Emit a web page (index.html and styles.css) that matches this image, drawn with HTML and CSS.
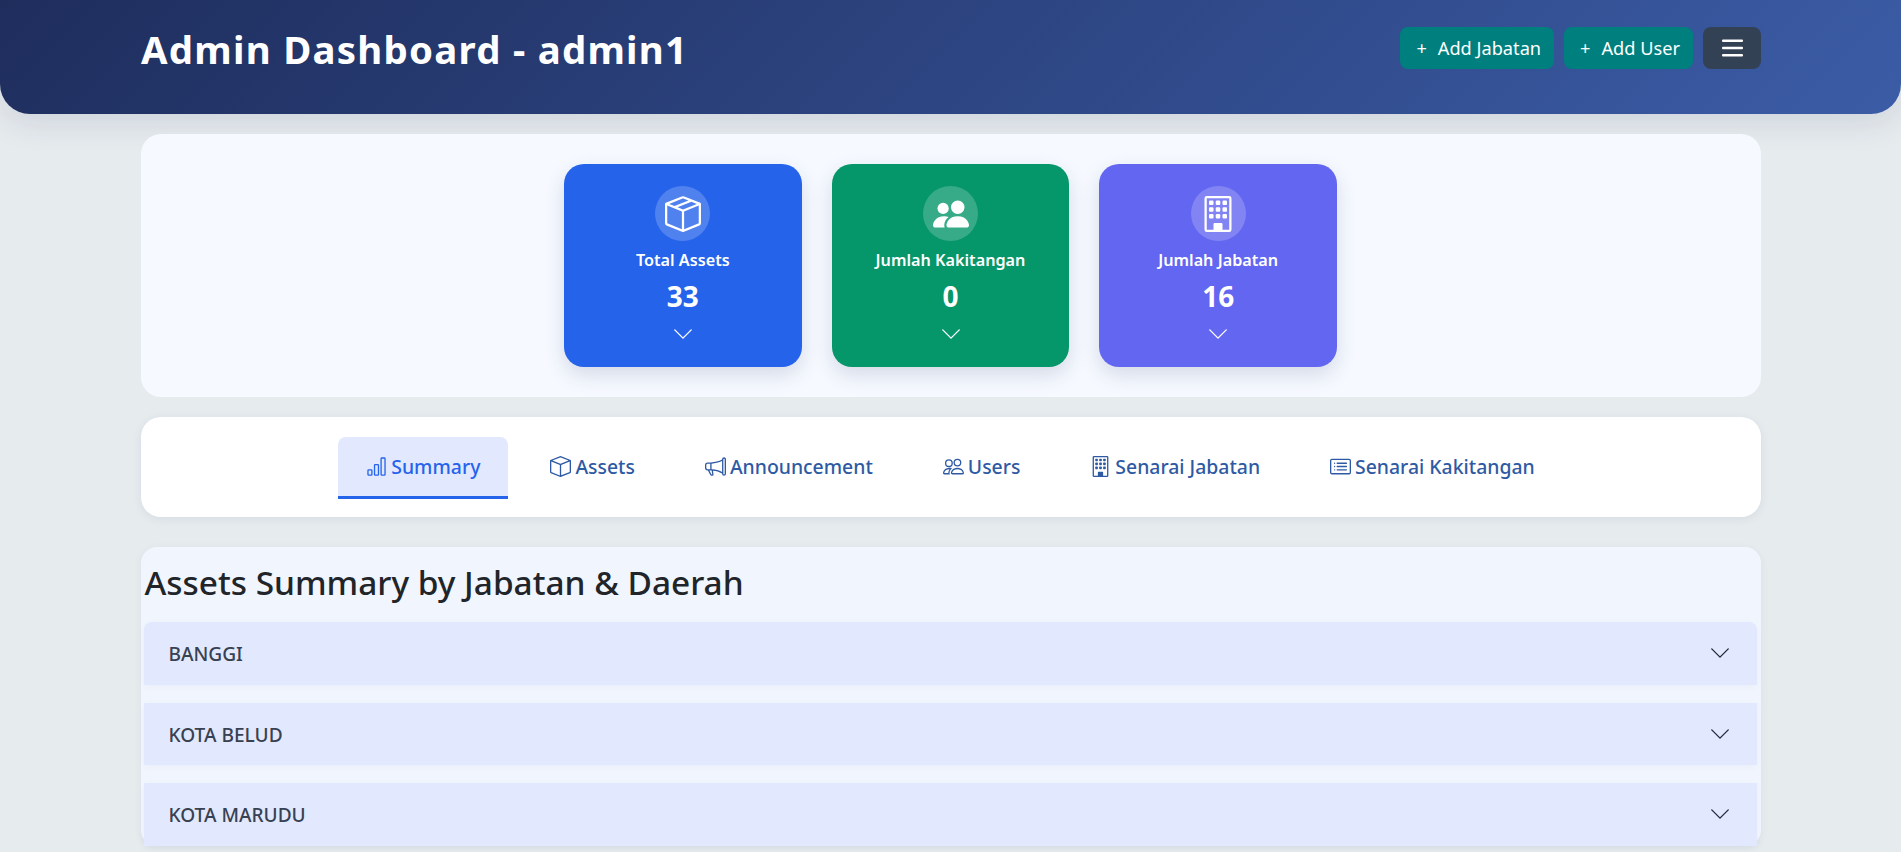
FILE: index.html
```html
<!DOCTYPE html>
<html lang="en">
<head>
  <meta charset="UTF-8">
  <meta name="viewport" content="width=device-width, initial-scale=1.0">
  <title>Admin Dashboard</title>
  <link rel="stylesheet" href="styles.css">
</head>
<body>

<!-- Icon sprite -->
<svg class="sprite" xmlns="http://www.w3.org/2000/svg">
  <symbol id="i-box-seam" viewBox="0 0 16 16"><path d="M8.186 1.113a.5.5 0 0 0-.372 0L1.846 3.5l2.404.961L10.404 2l-2.218-.887zm3.564 1.426L5.596 5 8 5.961 14.154 3.5l-2.404-.961zm3.25 1.7-6.5 2.6v7.922l6.5-2.6V4.24zM7.5 14.762V6.838L1 4.239v7.925l6.5 2.6zM7.443.184a1.5 1.5 0 0 1 1.114 0l7.129 2.852A.5.5 0 0 1 16 3.5v8.662a1 1 0 0 1-.629.928l-7.185 2.874a.5.5 0 0 1-.372 0L.63 13.09a1 1 0 0 1-.63-.928V3.5a.5.5 0 0 1 .314-.464L7.443.184z"/></symbol>
  <symbol id="i-box" viewBox="0 0 16 16"><path d="M8.186 1.113a.5.5 0 0 0-.372 0L1.846 3.5 8 5.961 14.154 3.5 8.186 1.113zM15 4.239l-6.5 2.6v7.922l6.5-2.6V4.24zM7.5 14.762V6.838L1 4.239v7.925l6.5 2.6zM7.443.184a1.5 1.5 0 0 1 1.114 0l7.129 2.852A.5.5 0 0 1 16 3.5v8.662a1 1 0 0 1-.629.928l-7.185 2.874a.5.5 0 0 1-.372 0L.63 13.09a1 1 0 0 1-.63-.928V3.5a.5.5 0 0 1 .314-.464L7.443.184z"/></symbol>
  <symbol id="i-people-fill" viewBox="0 0 16 16"><path d="M7 14s-1 0-1-1 1-4 5-4 5 3 5 4-1 1-1 1H7zm4-6a3 3 0 1 0 0-6 3 3 0 0 0 0 6z"/><path d="M5.216 14A2.238 2.238 0 0 1 5 13c0-1.355.68-2.75 1.936-3.72A6.325 6.325 0 0 0 5 9c-4 0-5 3-5 4s1 1 1 1h4.216z"/><path d="M4.5 8a2.5 2.5 0 1 0 0-5 2.5 2.5 0 0 0 0 5z"/></symbol>
  <symbol id="i-people" viewBox="0 0 16 16"><path d="M15 14s1 0 1-1-1-4-5-4-5 3-5 4 1 1 1 1h8Zm-7.978-1A.261.261 0 0 1 7 12.996c.001-.264.167-1.03.76-1.72C8.312 10.629 9.282 10 11 10c1.717 0 2.687.63 3.24 1.276.593.69.758 1.457.76 1.72l-.008.002a.274.274 0 0 1-.014.002H7.022ZM11 7a2 2 0 1 0 0-4 2 2 0 0 0 0 4Zm3-2a3 3 0 1 1-6 0 3 3 0 0 1 6 0ZM6.936 9.28a5.88 5.88 0 0 0-1.23-.247A7.35 7.35 0 0 0 5 9c-4 0-5 3-5 4 0 .667.333 1 1 1h4.216A2.238 2.238 0 0 1 5 13c0-1.01.377-2.042 1.09-2.904.243-.294.526-.569.846-.816ZM4.92 10A5.493 5.493 0 0 0 4 13H1c0-.26.164-1.03.76-1.724.545-.636 1.492-1.256 3.16-1.275ZM1.5 5.5a3 3 0 1 1 6 0 3 3 0 0 1-6 0Zm3-2a2 2 0 1 0 0 4 2 2 0 0 0 0-4Z"/></symbol>
  <symbol id="i-building" viewBox="0 0 16 16"><path d="M2 1a1 1 0 0 1 1-1h10a1 1 0 0 1 1 1v14a1 1 0 0 1-1 1H3a1 1 0 0 1-1-1V1Zm11 0H3v14h3v-2.5a.5.5 0 0 1 .5-.5h3a.5.5 0 0 1 .5.5V15h3V1Z"/><rect x="4" y="2" width="2" height="2" rx=".5"/><rect x="7" y="2" width="2" height="2" rx=".5"/><rect x="10" y="2" width="2" height="2" rx=".5"/><rect x="4" y="5" width="2" height="2" rx=".5"/><rect x="7" y="5" width="2" height="2" rx=".5"/><rect x="10" y="5" width="2" height="2" rx=".5"/><rect x="4" y="8" width="2" height="2" rx=".5"/><rect x="7" y="8" width="2" height="2" rx=".5"/><rect x="10" y="8" width="2" height="2" rx=".5"/></symbol>
  <symbol id="i-bar-chart" viewBox="0 0 16 16"><path d="M4 11H2v3h2v-3zm5-4H7v7h2V7zm5-5v12h-2V2h2zm-2-1a1 1 0 0 0-1 1v12a1 1 0 0 0 1 1h2a1 1 0 0 0 1-1V2a1 1 0 0 0-1-1h-2zM6 7a1 1 0 0 1 1-1h2a1 1 0 0 1 1 1v7a1 1 0 0 1-1 1H7a1 1 0 0 1-1-1V7zm-5 4a1 1 0 0 1 1-1h2a1 1 0 0 1 1 1v3a1 1 0 0 1-1 1H2a1 1 0 0 1-1-1v-3z"/></symbol>
  <symbol id="i-megaphone" viewBox="0 0 16 16"><path d="M13 2.5a1.5 1.5 0 0 1 3 0v11a1.5 1.5 0 0 1-3 0v-.214c-2.162-1.241-4.49-1.843-6.912-2.083l.405 2.712A1 1 0 0 1 5.51 15.1h-.548a1 1 0 0 1-.916-.599l-1.85-3.49a68.14 68.14 0 0 0-.202-.003A2.014 2.014 0 0 1 0 9V7a2.02 2.02 0 0 1 1.992-2.013 74.663 74.663 0 0 0 2.483-.075c3.043-.154 6.148-.849 8.525-2.199V2.5zm1 0v11a.5.5 0 0 0 1 0v-11a.5.5 0 0 0-1 0zm-1 1.35c-2.344 1.205-5.209 1.842-8 2.033v4.233c.18.01.359.022.537.036 2.568.189 5.093.744 7.463 1.993V3.85zm-9 6.215v-4.13a95.09 95.09 0 0 1-1.992.052A1.02 1.02 0 0 0 1 7v2c0 .55.448 1.002 1.006 1.009A60.49 60.49 0 0 1 4 10.065zm-.657.975 1.609 3.037.01.024h.548l-.002-.014-.443-2.966a68.019 68.019 0 0 0-1.722-.082z"/></symbol>
  <symbol id="i-card-list" viewBox="0 0 16 16"><path d="M14.5 3a.5.5 0 0 1 .5.5v9a.5.5 0 0 1-.5.5h-13a.5.5 0 0 1-.5-.5v-9a.5.5 0 0 1 .5-.5h13zm-13-1A1.5 1.5 0 0 0 0 3.5v9A1.5 1.5 0 0 0 1.5 14h13a1.5 1.5 0 0 0 1.5-1.5v-9A1.5 1.5 0 0 0 14.5 2h-13z"/><path d="M5 8a.5.5 0 0 1 .5-.5h7a.5.5 0 0 1 0 1h-7A.5.5 0 0 1 5 8zm0-2.5a.5.5 0 0 1 .5-.5h7a.5.5 0 0 1 0 1h-7a.5.5 0 0 1-.5-.5zm0 5a.5.5 0 0 1 .5-.5h7a.5.5 0 0 1 0 1h-7a.5.5 0 0 1-.5-.5zm-1-5a.5.5 0 1 1-1 0 .5.5 0 0 1 1 0zM4 8a.5.5 0 1 1-1 0 .5.5 0 0 1 1 0zm0 2.5a.5.5 0 1 1-1 0 .5.5 0 0 1 1 0z"/></symbol>
  <symbol id="i-chevron" viewBox="0 0 16 16"><path d="M1.646 4.646a.5.5 0 0 1 .708 0L8 10.293l5.646-5.647a.5.5 0 0 1 .708.708l-6 6a.5.5 0 0 1-.708 0l-6-6a.5.5 0 0 1 0-.708z"/></symbol>
</svg>

<!-- Header -->
<header class="topbar">
  <h1 class="topbar-title">Admin Dashboard - admin1</h1>
  <div class="topbar-actions">
    <button class="btn btn-add"><span class="plus">+</span>Add Jabatan</button>
    <button class="btn btn-add"><span class="plus">+</span>Add User</button>
    <button class="btn btn-menu" aria-label="Menu">
      <svg class="menu-icon" viewBox="0 0 21 18"><rect y="0.5" width="21" height="2.6" rx="1"/><rect y="7.7" width="21" height="2.6" rx="1"/><rect y="14.9" width="21" height="2.6" rx="1"/></svg>
    </button>
  </div>
</header>

<main class="page">

  <!-- Kad statistik -->
  <section class="stats-panel">
    <div class="stat-card stat-blue">
      <div class="stat-icon"><svg><use href="#i-box-seam"/></svg></div>
      <div class="stat-label">Total Assets</div>
      <div class="stat-value">33</div>
      <svg class="stat-chevron"><use href="#i-chevron"/></svg>
    </div>
    <div class="stat-card stat-green">
      <div class="stat-icon"><svg><use href="#i-people-fill"/></svg></div>
      <div class="stat-label">Jumlah Kakitangan</div>
      <div class="stat-value">0</div>
      <svg class="stat-chevron"><use href="#i-chevron"/></svg>
    </div>
    <div class="stat-card stat-indigo">
      <div class="stat-icon"><svg><use href="#i-building"/></svg></div>
      <div class="stat-label">Jumlah Jabatan</div>
      <div class="stat-value">16</div>
      <svg class="stat-chevron"><use href="#i-chevron"/></svg>
    </div>
  </section>

  <!-- Tabs -->
  <nav class="tabs-panel">
    <a class="tab active"><svg><use href="#i-bar-chart"/></svg>Summary</a>
    <a class="tab"><svg><use href="#i-box"/></svg>Assets</a>
    <a class="tab"><svg><use href="#i-megaphone"/></svg>Announcement</a>
    <a class="tab"><svg><use href="#i-people"/></svg>Users</a>
    <a class="tab"><svg><use href="#i-building"/></svg>Senarai Jabatan</a>
    <a class="tab"><svg><use href="#i-card-list"/></svg>Senarai Kakitangan</a>
  </nav>

  <!-- Ringkasan -->
  <section class="summary-panel">
    <h2 class="summary-title">Assets Summary by Jabatan &amp; Daerah</h2>
    <div class="acc-item"><span>BANGGI</span><svg><use href="#i-chevron"/></svg></div>
    <div class="acc-item"><span>KOTA BELUD</span><svg><use href="#i-chevron"/></svg></div>
    <div class="acc-item"><span>KOTA MARUDU</span><svg><use href="#i-chevron"/></svg></div>
  </section>

</main>

</body>
</html>
```

FILE: styles.css
```css
html,
body {
  height: 100%;
  overflow: hidden;
}

body {
  margin: 0;
  background-color: #e6ebee;
  font-family: "Noto Sans", "Open Sans", sans-serif;
}

.sprite {
  display: none;
}

/* Header */
.topbar {
  display: flex;
  justify-content: space-between;
  align-items: flex-start;
  height: 114px;
  box-sizing: border-box;
  padding: 27px 140px 0 141px;
  background: linear-gradient(135deg, #1e2d5c, #3b5ca6);
  border-radius: 0 0 30px 30px;
  box-shadow: 0 8px 32px rgba(30, 45, 92, 0.12);
  color: #fff;
}

.topbar-title {
  margin: 0;
  font-size: 38.4px;
  line-height: 45px;
  font-weight: 700;
  letter-spacing: 1.25px;
}

.topbar-actions {
  display: flex;
  gap: 10px;
}

.btn {
  display: flex;
  align-items: center;
  justify-content: center;
  height: 42px;
  border: none;
  border-radius: 8px;
  color: #fff;
  font-family: inherit;
  font-size: 18.2px;
  cursor: pointer;
}

.btn-add {
  padding: 0 13px 0 14px;
  background-color: #007f7f;
}

.plus {
  margin: 0 11px 0 2px;
}

.btn-menu {
  width: 58px;
  background-color: #334155;
}

.menu-icon {
  width: 21px;
  height: 18px;
  fill: #fff;
}

/* Contenido */
.page {
  width: 1620px;
  margin: 20px auto 0;
}

.stats-panel {
  display: flex;
  justify-content: center;
  gap: 30px;
  padding: 30px;
  background-color: #f6f9ff;
  border-radius: 20px;
}

.stat-card {
  display: flex;
  flex-direction: column;
  align-items: center;
  width: 237.67px;
  height: 203px;
  box-sizing: border-box;
  padding-top: 22px;
  border-radius: 20px;
  color: #fff;
  box-shadow: 0 8px 20px rgba(30, 45, 92, 0.15);
}

.stat-blue {
  background-color: #2563eb;
}

.stat-green {
  background-color: #059669;
}

.stat-indigo {
  background-color: #6366f1;
}

.stat-icon {
  display: flex;
  align-items: center;
  justify-content: center;
  width: 55px;
  height: 55px;
  border-radius: 50%;
  background-color: rgba(255, 255, 255, 0.2);
}

.stat-icon svg {
  width: 36px;
  height: 36px;
  fill: #fff;
}

.stat-label {
  margin-top: 7px;
  font-size: 16.2px;
  line-height: 24px;
  font-weight: 600;
}

.stat-value {
  margin-top: 5px;
  font-size: 28px;
  line-height: 38px;
  font-weight: 700;
}

.stat-chevron {
  width: 22px;
  height: 22px;
  margin-top: 8px;
  fill: #fff;
}

/* Tabs */
.tabs-panel {
  display: flex;
  justify-content: center;
  gap: 14px;
  height: 100px;
  box-sizing: border-box;
  margin-top: 20px;
  padding-top: 20px;
  background-color: #fff;
  border-radius: 20px;
  box-shadow: 0 2px 10px rgba(30, 45, 92, 0.08);
}

.tab {
  display: flex;
  align-items: center;
  gap: 4px;
  height: 62px;
  box-sizing: border-box;
  padding: 0 28px;
  border-bottom: 3px solid transparent;
  border-radius: 8px 8px 0 0;
  font-size: 19.4px;
  font-weight: 500;
  color: #2e5aa3;
}

.tab svg {
  width: 21px;
  height: 21px;
  fill: currentColor;
}

.tab.active {
  background-color: #e2e8fe;
  border-bottom-color: #2563eb;
  color: #2563eb;
}

/* Ringkasan */
.summary-panel {
  margin-top: 30px;
  padding: 12px 4px 0 3px;
  background-color: #f1f5fe;
  border-radius: 16px;
  box-shadow: 0 2px 10px rgba(30, 45, 92, 0.05);
}

.summary-title {
  margin: 0 0 16px 1px;
  font-size: 33.4px;
  line-height: 47px;
  font-weight: 500;
  color: #212529;
}

.acc-item {
  display: flex;
  align-items: center;
  justify-content: space-between;
  height: 62.5px;
  margin-bottom: 18px;
  padding: 0 26px 0 25px;
  background-color: #e2e8fe;
  font-size: 19.1px;
  font-weight: 500;
  color: #374151;
  box-shadow: 0 2px 8px rgba(30, 45, 92, 0.03);
}

.acc-item span {
  padding-top: 2px;
}

.acc-item:first-of-type {
  border-radius: 8px 8px 0 0;
}

.acc-item svg {
  width: 22px;
  height: 22px;
  fill: #1f2937;
}
```
